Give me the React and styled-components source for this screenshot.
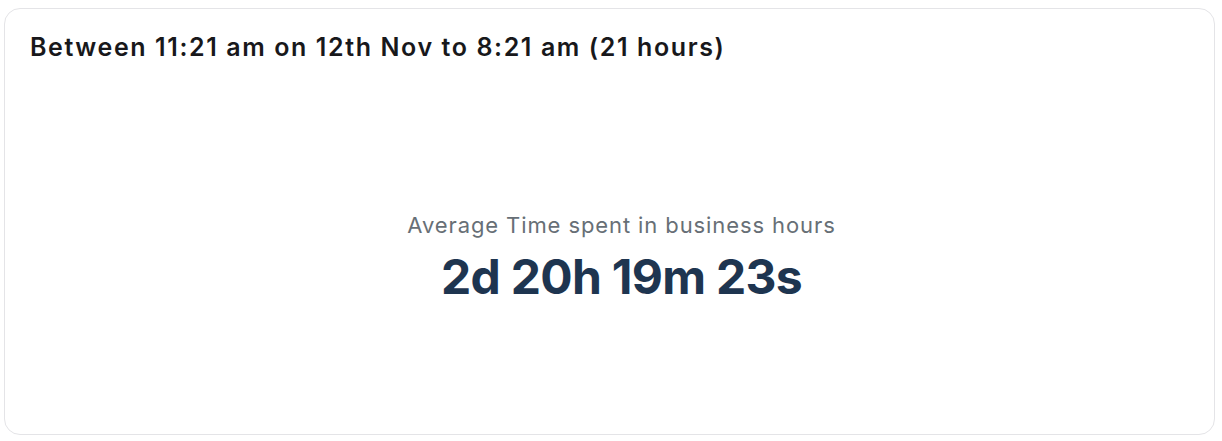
import React from "react";
import styled, { createGlobalStyle } from "styled-components";

const GlobalStyle = createGlobalStyle`
  body {
    margin: 0;
    background: #ffffff;
    font-family: Inter, "Noto Sans", sans-serif;
  }
`;

const Page = styled.div`
  padding: 8px 7px 6px 4px;
`;

const Card = styled.section`
  box-sizing: border-box;
  height: 427px;
  border: 1px solid #e4e4e7;
  border-radius: 16px;
  background: #ffffff;
  display: flex;
  flex-direction: column;
  padding: 22px 25px 24px;
`;

const Title = styled.h2`
  margin: 0;
  font-size: 25px;
  line-height: 32px;
  font-weight: 600;
  letter-spacing: 1.6px;
  color: #18181b;
`;

const Body = styled.div`
  flex: 1;
  display: flex;
  flex-direction: column;
  align-items: center;
  justify-content: center;
  padding: 42px 0 0 24px;
`;

const Label = styled.div`
  font-size: 22px;
  line-height: 30px;
  letter-spacing: 0.9px;
  color: #676f76;
`;

const Value = styled.div`
  margin-top: 9px;
  font-size: 48px;
  line-height: 56px;
  font-weight: 700;
  color: #1e3550;
  letter-spacing: -0.7px;
`;

export default function App() {
  return (
    <Page>
      <GlobalStyle />
      <Card>
        <Title>Between 11:21 am on 12th Nov to 8:21 am (21 hours)</Title>
        <Body>
          <Label>Average Time spent in business hours</Label>
          <Value>2d 20h 19m 23s</Value>
        </Body>
      </Card>
    </Page>
  );
}
